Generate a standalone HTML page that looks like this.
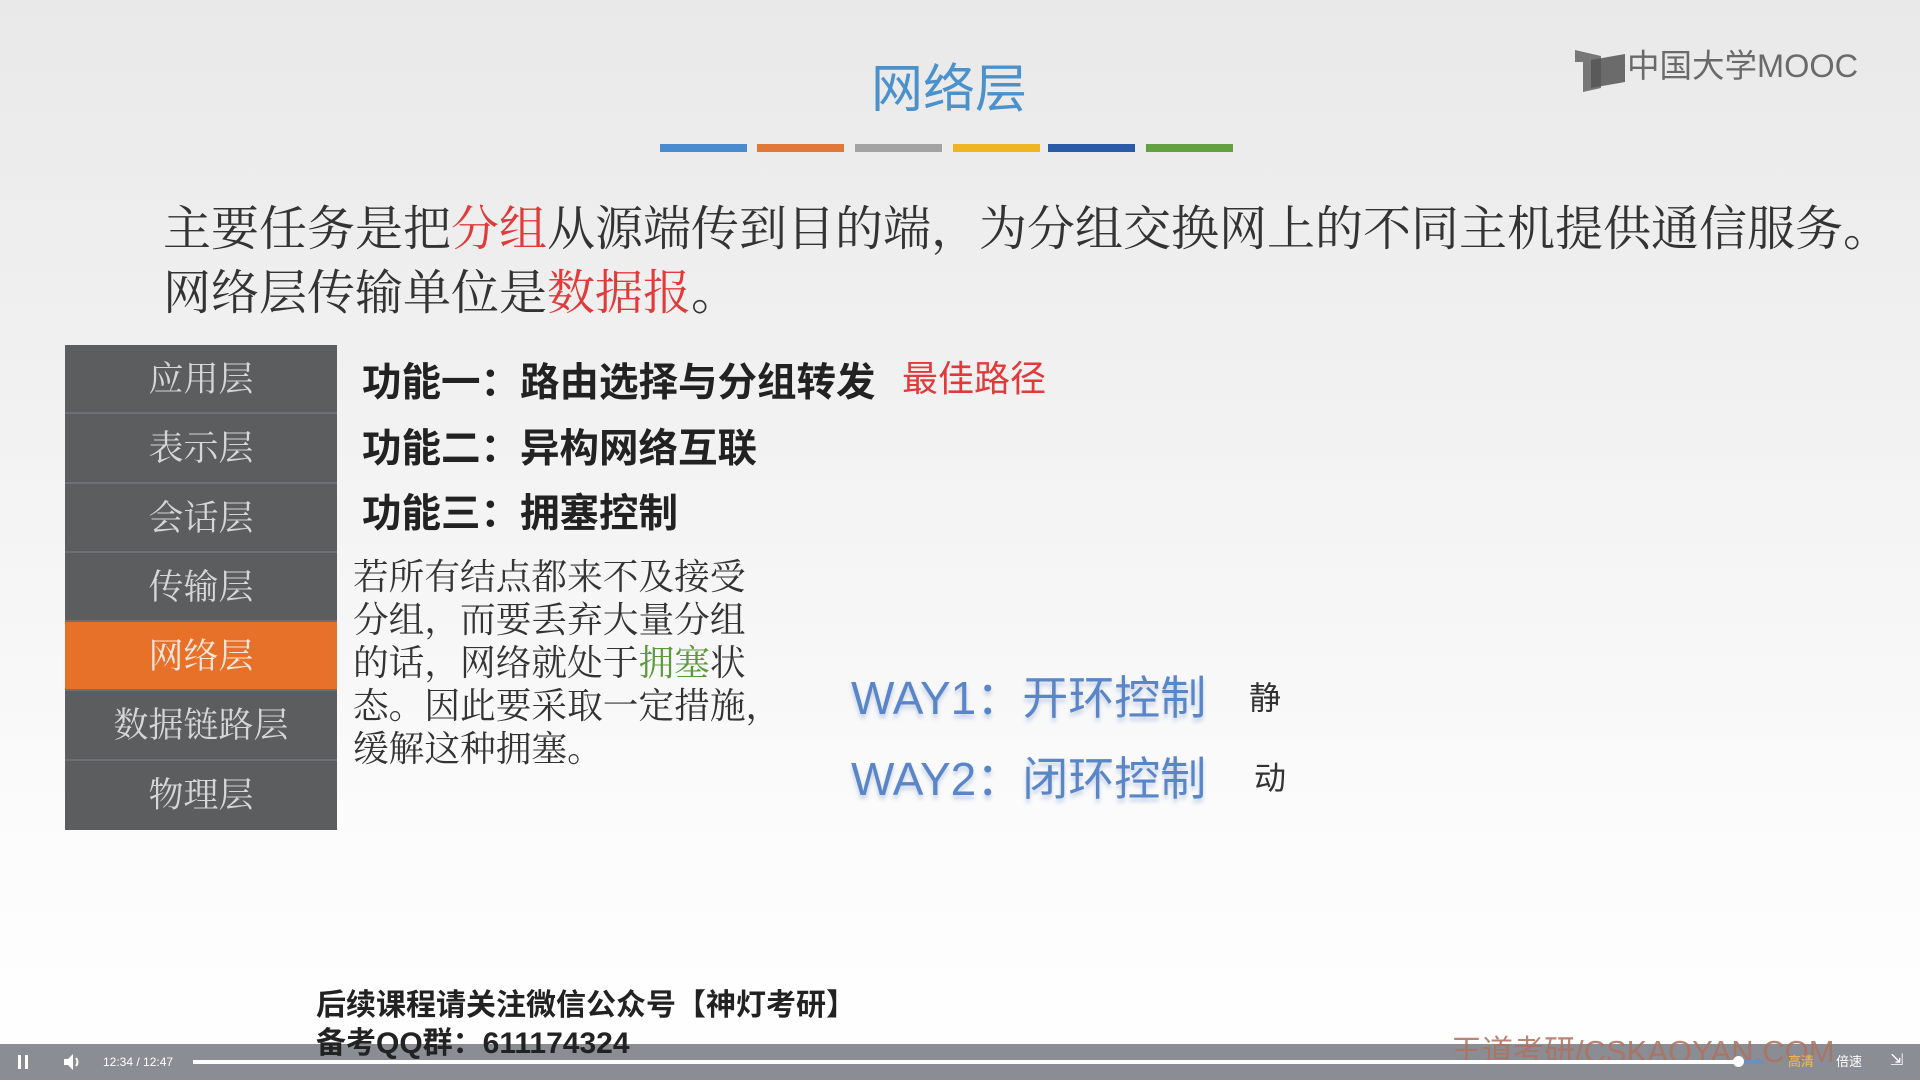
<!DOCTYPE html>
<html><head><meta charset="utf-8"><style>
*{margin:0;padding:0;box-sizing:border-box}
body{width:1920px;height:1080px;overflow:hidden;position:relative;background:linear-gradient(#e9e9e9 0%,#f2f2f2 40%,#fbfbfb 75%,#fff 100%);font-family:"Liberation Sans","Noto Sans CJK SC",sans-serif}
.a{position:absolute;white-space:nowrap;line-height:1}
.serif{font-family:"Liberation Serif","Noto Serif CJK SC",serif}
.bar{position:absolute;top:144px;height:8px;width:87px}
.side{position:absolute;left:65px;top:345px;width:272px;height:485px;background:#5b5d5f}
.side div{height:69.3px;line-height:69.3px;text-align:center;color:#d6d6d6;font-size:35px;border-bottom:2px solid #6d7072;font-family:"Liberation Serif","Noto Serif CJK SC",serif}
.way{color:#5a86c8;font-size:46px;text-shadow:0 4px 4px rgba(80,120,190,.3)}
.f{font-size:39.5px;color:#222;font-weight:bold}
</style></head><body>
<div class="a" style="left:0;width:1898px;top:64px;text-align:center;font-size:52px;color:#4b92cc">网络层</div>
<div class="bar" style="left:660px;background:#4a8bd0"></div>
<div class="bar" style="left:757px;background:#e0783a"></div>
<div class="bar" style="left:855px;background:#a3a3a3"></div>
<div class="bar" style="left:953px;background:#efb522"></div>
<div class="bar" style="left:1048px;background:#2b5aa6"></div>
<div class="bar" style="left:1146px;background:#63a042"></div>
<div class="a" style="left:1575px;top:48px;width:48px;height:40px">
<svg width="52" height="44" viewBox="0 0 52 44"><path d="M0 2 L26 8 L26 40 L8 44 L8 14 L0 14Z" fill="#777"/><path d="M16 12 L50 6 L50 34 L16 40Z" fill="#555" opacity=".85"/></svg></div>
<div class="a" style="left:1627px;top:50px;font-size:32.5px;color:#6a6a6a">中国大学MOOC</div>
<div class="a serif" style="left:163px;top:206px;font-size:48px;color:#333">主要任务是把<span style="color:#e03a3a">分组</span>从源端传到目的端，为分组交换网上的不同主机提供通信服务。</div>
<div class="a serif" style="left:163px;top:270px;font-size:48px;color:#333">网络层传输单位是<span style="color:#e03a3a">数据报</span>。</div>
<div class="side">
<div>应用层</div><div>表示层</div><div>会话层</div><div>传输层</div>
<div style="background:#e8712a;color:#f4e6dc">网络层</div><div>数据链路层</div><div style="border:0">物理层</div></div>
<div class="a f" style="left:362px;top:364px">功能一：路由选择与分组转发</div>
<div class="a" style="left:902px;top:361px;font-size:36px;color:#e03a3a">最佳路径</div>
<div class="a f" style="left:362px;top:430px">功能二：异构网络互联</div>
<div class="a f" style="left:362px;top:495px">功能三：拥塞控制</div>
<div class="a serif" style="left:353px;top:556px;font-size:35.7px;color:#333;line-height:43px;white-space:normal;width:460px">若所有结点都来不及接受<br>分组，而要丢弃大量分组<br>的话，网络就处于<span style="color:#5a9a3a">拥塞</span>状<br>态。因此要采取一定措施，<br>缓解这种拥塞。</div>
<div class="a way" style="left:851px;top:675px">WAY1：开环控制</div>
<div class="a way" style="left:851px;top:756px">WAY2：闭环控制</div>
<div class="a" style="left:1249px;top:682px;font-size:32px;color:#333">静</div>
<div class="a" style="left:1254px;top:762px;font-size:32px;color:#333">动</div>
<div style="position:absolute;left:0;top:1044px;width:1920px;height:36px;background:#8a8e94"></div>
<div class="a" style="left:316px;top:991px;font-size:30px;color:#222;font-weight:bold">后续课程请关注微信公众号【神灯考研】</div>
<div class="a" style="left:316px;top:1029px;font-size:30px;color:#222;font-weight:bold">备考QQ群：611174324</div>
<div class="a" style="left:1451px;top:1036px;font-size:31px;color:#b0705e;opacity:.85">王道考研/CSKAOYAN.COM</div>
<div style="position:absolute;left:18px;top:1055px;width:3px;height:14px;background:#fff"></div>
<div style="position:absolute;left:25px;top:1055px;width:3px;height:14px;background:#fff"></div>
<svg style="position:absolute;left:63px;top:1053px" width="20" height="18"><path d="M1 6h4l5-5v16l-5-5H1z" fill="#fff"/><path d="M13 5q3 4 0 8" stroke="#fff" stroke-width="2" fill="none"/></svg>
<div class="a" style="left:103px;top:1056px;font-size:12px;color:#fff">12:34 / 12:47</div>
<div style="position:absolute;left:193px;top:1060px;width:1546px;height:4px;background:#fff"></div>
<div style="position:absolute;left:1733px;top:1056px;width:11px;height:11px;border-radius:50%;background:#fff"></div>
<div style="position:absolute;left:1744px;top:1060px;width:20px;height:4px;background:#6d8fb8"></div>
<div class="a" style="left:1788px;top:1055px;font-size:13px;color:#f0c040">高清</div>
<div class="a" style="left:1836px;top:1055px;font-size:13px;color:#fff">倍速</div>
<div class="a" style="left:1890px;top:1053px;font-size:16px;color:#fff">⇲</div>
</body></html>
